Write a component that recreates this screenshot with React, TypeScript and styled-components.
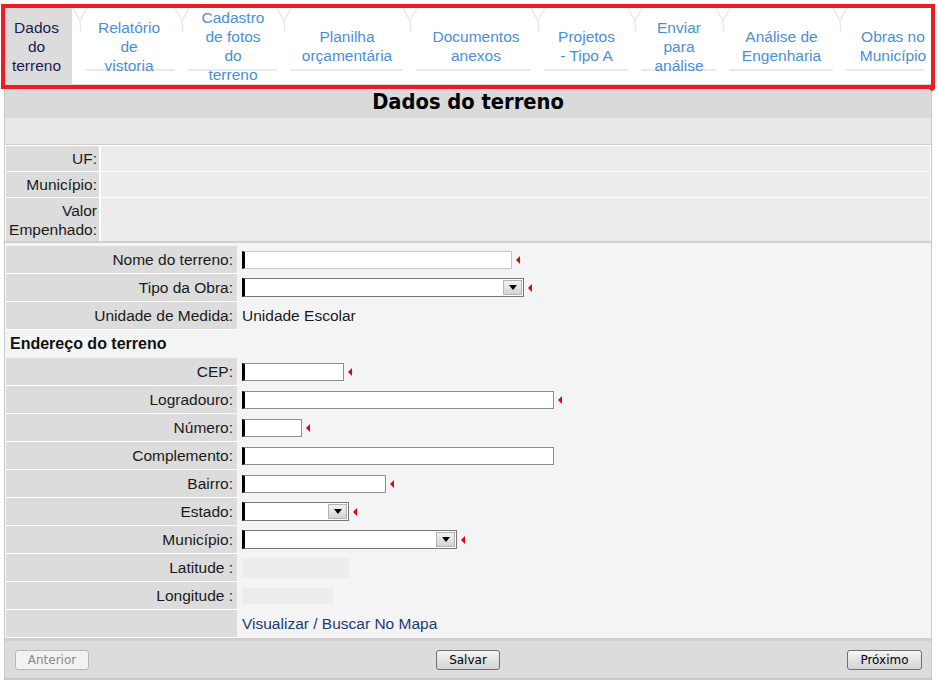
import styled, { createGlobalStyle } from 'styled-components';

const GlobalStyle = createGlobalStyle`
  html, body {
    margin: 0;
    padding: 0;
    background: #fff;
  }
  body {
    font-family: "Liberation Sans", Arial, sans-serif;
    font-size: 15.5px;
    color: #1a1a1a;
  }
`;

const Page = styled.div`
  width: 937px;
  padding-top: 4px;
`;

/* red annotation frame around the tab strip */
const Highlight = styled.div`
  position: relative;
  box-sizing: border-box;
  margin-left: 1px;
  width: 934px;
  height: 85px;
  border: 4px solid #ed1c24;
  background: #fff;

  &::after {
    content: '';
    position: absolute;
    right: -3px;
    bottom: -6px;
    width: 4px;
    height: 4px;
    border-radius: 50%;
    background: #ed1c24;
  }
`;

const TabBar = styled.ul`
  display: flex;
  box-sizing: border-box;
  height: 77px;
  margin: 0;
  padding: 0;
  list-style: none;
  border-bottom: 1px solid #d8d8d8;
`;

const Tab = styled.li<{ $w: number; $active?: boolean; $pl?: number; $pr?: number }>`
  position: relative;
  box-sizing: border-box;
  flex: 0 0 ${(p) => p.$w}px;
  display: flex;
  align-items: center;
  justify-content: center;
  margin-right: ${(p) => (p.$active ? 8 : 0)}px;
  padding: 0 ${(p) => p.$pr ?? 0}px 0 ${(p) => p.$pl ?? 0}px;
  text-align: center;
  white-space: pre-line;
  font-size: 15.5px;
  line-height: 19px;
  color: ${(p) => (p.$active ? '#1b1b50' : '#4a8fda')};
  background: ${(p) => (p.$active ? '#dcdcdc' : 'transparent')};
  cursor: pointer;

  ${(p) =>
    !p.$active &&
    `
    &::before {
      content: '';
      position: absolute;
      left: 6px;
      right: 7px;
      top: 61px;
      height: 2px;
      background: #ebebeb;
    }
  `}
`;

const TabText = styled.span`
  position: relative;
`;

const Notch = styled.svg`
  position: absolute;
  left: -8px;
  top: 0;
`;

const Panel = styled.div`
  box-sizing: border-box;
  margin-left: 4px;
  width: 928px;
  border: 1px solid #c8c8c8;
  border-top: none;
  border-bottom-width: 2px;
  background: #f4f4f4;
`;

const TitleBar = styled.h1`
  margin: 0;
  height: 29px;
  background: #dadada;
  text-align: center;
  font-family: "DejaVu Sans Condensed", "DejaVu Sans", Verdana, sans-serif;
  font-stretch: condensed;
  font-weight: bold;
  font-size: 21.7px;
  line-height: 25px;
  color: #000;
`;

const SubBar = styled.div`
  height: 26px;
  background: #e8e8e8;
`;

const InfoGrid = styled.div`
  display: grid;
  grid-template-columns: 93px 1fr;
  grid-template-rows: 25px 25px 43px;
  column-gap: 2px;
  row-gap: 1px;
  padding: 1px 1px 0;
  background: #fff;
  border-top: 1px solid #cfcfcf;
  border-bottom: 2px solid #cfcfcf;
`;

const InfoLabel = styled.div`
  display: flex;
  align-items: center;
  justify-content: flex-end;
  padding-right: 2px;
  background: #dcdcdc;
  text-align: right;
  line-height: 19px;
`;

const InfoValue = styled.div`
  background: #ececec;
`;

const Form = styled.div`
  display: grid;
  grid-template-columns: 231px 1fr;
  grid-auto-rows: 28px;
  padding: 3px 0 0 1px;
`;

const Label = styled.div`
  display: flex;
  align-items: center;
  justify-content: flex-end;
  padding-right: 4px;
  background: #dcdcdc;
  border-bottom: 1px solid #fff;
`;

const Value = styled.div`
  display: flex;
  align-items: center;
  gap: 4px;
  padding-left: 5px;
  padding-bottom: 1px;
`;

const Section = styled.div`
  grid-column: 1 / -1;
  display: flex;
  align-items: center;
  padding-left: 4px;
  font-weight: bold;
  font-size: 16px;
  color: #111;
`;

const TextField = styled.input<{ $w: number; $soft?: boolean }>`
  box-sizing: border-box;
  width: ${(p) => p.$w}px;
  height: 18px;
  margin: 0;
  padding: 0 2px;
  border: 1px solid ${(p) => (p.$soft ? '#c8c8c8' : '#8f8f8f')};
  border-left: 3px solid #000;
  background: #fff;
  font: inherit;
  outline: none;
`;

const SelectBox = styled.div<{ $w: number }>`
  box-sizing: border-box;
  display: flex;
  justify-content: flex-end;
  width: ${(p) => p.$w}px;
  height: 19px;
  padding: 1px;
  border: 1px solid #777;
  border-left: 3px solid #000;
  background: #fff;
`;

const SelectArrow = styled.span`
  box-sizing: border-box;
  display: flex;
  align-items: center;
  justify-content: center;
  width: 19px;
  border: 1px solid #b4b4b4;
  background: linear-gradient(#f2f2f2, #d4d4d4);

  &::after {
    content: '';
    border-left: 4px solid transparent;
    border-right: 4px solid transparent;
    border-top: 5px solid #000;
  }
`;

const Required = styled.span`
  width: 0;
  height: 0;
  border-top: 4px solid transparent;
  border-bottom: 4px solid transparent;
  border-right: 4px solid #e4000f;
`;

const GeoBox = styled.div<{ $w: number; $h: number }>`
  width: ${(p) => p.$w}px;
  height: ${(p) => p.$h}px;
  background: #ededed;
`;

const MapLink = styled.a`
  color: #1d3b78;
  text-decoration: none;
  cursor: pointer;
`;

const Footer = styled.div`
  display: flex;
  align-items: center;
  justify-content: space-between;
  height: 37px;
  padding: 0 9px 0 10px;
  background: #dcdcdc;
  border-top: 3px solid #cfcfcf;
`;

const Button = styled.button<{ $w: number }>`
  box-sizing: border-box;
  width: ${(p) => p.$w}px;
  height: 20px;
  padding: 0;
  border: 1px solid #707070;
  border-radius: 3px;
  background: linear-gradient(#f6f6f6, #e2e2e2 50%, #d6d6d6);
  font-family: "DejaVu Sans", Tahoma, sans-serif;
  font-size: 12px;
  color: #000;

  &:disabled {
    border-color: #b8b8b8;
    background: #f2f2f2;
    color: #8a8a8a;
  }
`;

const tabs = [
  { label: 'Dados\ndo\nterreno', w: 67, active: true, pr: 4 },
  { label: 'Relatório\nde\nvistoria', w: 102, pr: 4 },
  { label: 'Cadastro\nde fotos\ndo\nterreno', w: 102 },
  { label: 'Planilha\norçamentária', w: 126 },
  { label: 'Documentos\nanexos', w: 128, pl: 4 },
  { label: 'Projetos\n- Tipo A', w: 97 },
  { label: 'Enviar\npara\nanálise', w: 88 },
  { label: 'Análise de\nEngenharia', w: 117 },
  { label: 'Obras no\nMunicípio', w: 91, pl: 15 },
];

function Field({ w, soft, required = true }: { w: number; soft?: boolean; required?: boolean }) {
  return (
    <>
      <TextField type="text" $w={w} $soft={soft} />
      {required && <Required />}
    </>
  );
}

function Select({ w }: { w: number }) {
  return (
    <>
      <SelectBox $w={w}>
        <SelectArrow />
      </SelectBox>
      <Required />
    </>
  );
}

export default function App() {
  return (
    <Page>
      <GlobalStyle />
      <Highlight>
        <TabBar>
          {tabs.map((t) => (
            <Tab key={t.label} $w={t.w} $active={t.active} $pl={t.pl} $pr={t.pr}>
              {!t.active && (
                <Notch width="16" height="26" viewBox="0 0 16 26">
                  <path d="M1 0 L8 13 L15 0 M8 13 L9 24" fill="none" stroke="#e6e6e6" strokeWidth="1.3" />
                </Notch>
              )}
              <TabText>{t.label}</TabText>
            </Tab>
          ))}
        </TabBar>
      </Highlight>

      <Panel>
        <TitleBar>Dados do terreno</TitleBar>
        <SubBar />

        <InfoGrid>
          <InfoLabel>UF:</InfoLabel>
          <InfoValue />
          <InfoLabel>Município:</InfoLabel>
          <InfoValue />
          <InfoLabel>Valor Empenhado:</InfoLabel>
          <InfoValue />
        </InfoGrid>

        <Form>
          <Label>Nome do terreno:</Label>
          <Value>
            <Field w={270} soft />
          </Value>
          <Label>Tipo da Obra:</Label>
          <Value>
            <Select w={282} />
          </Value>
          <Label>Unidade de Medida:</Label>
          <Value>Unidade Escolar</Value>

          <Section>Endereço do terreno</Section>

          <Label>CEP:</Label>
          <Value>
            <Field w={102} />
          </Value>
          <Label>Logradouro:</Label>
          <Value>
            <Field w={312} />
          </Value>
          <Label>Número:</Label>
          <Value>
            <Field w={60} />
          </Value>
          <Label>Complemento:</Label>
          <Value>
            <Field w={312} required={false} />
          </Value>
          <Label>Bairro:</Label>
          <Value>
            <Field w={144} />
          </Value>
          <Label>Estado:</Label>
          <Value>
            <Select w={107} />
          </Value>
          <Label>Município:</Label>
          <Value>
            <Select w={215} />
          </Value>
          <Label>Latitude :</Label>
          <Value>
            <GeoBox $w={107} $h={20} />
          </Value>
          <Label>Longitude :</Label>
          <Value>
            <GeoBox $w={91} $h={16} />
          </Value>
          <Label />
          <Value>
            <MapLink>Visualizar / Buscar No Mapa</MapLink>
          </Value>
        </Form>

        <Footer>
          <Button $w={74} disabled>
            Anterior
          </Button>
          <Button $w={64}>Salvar</Button>
          <Button $w={75}>Próximo</Button>
        </Footer>
      </Panel>
    </Page>
  );
}
